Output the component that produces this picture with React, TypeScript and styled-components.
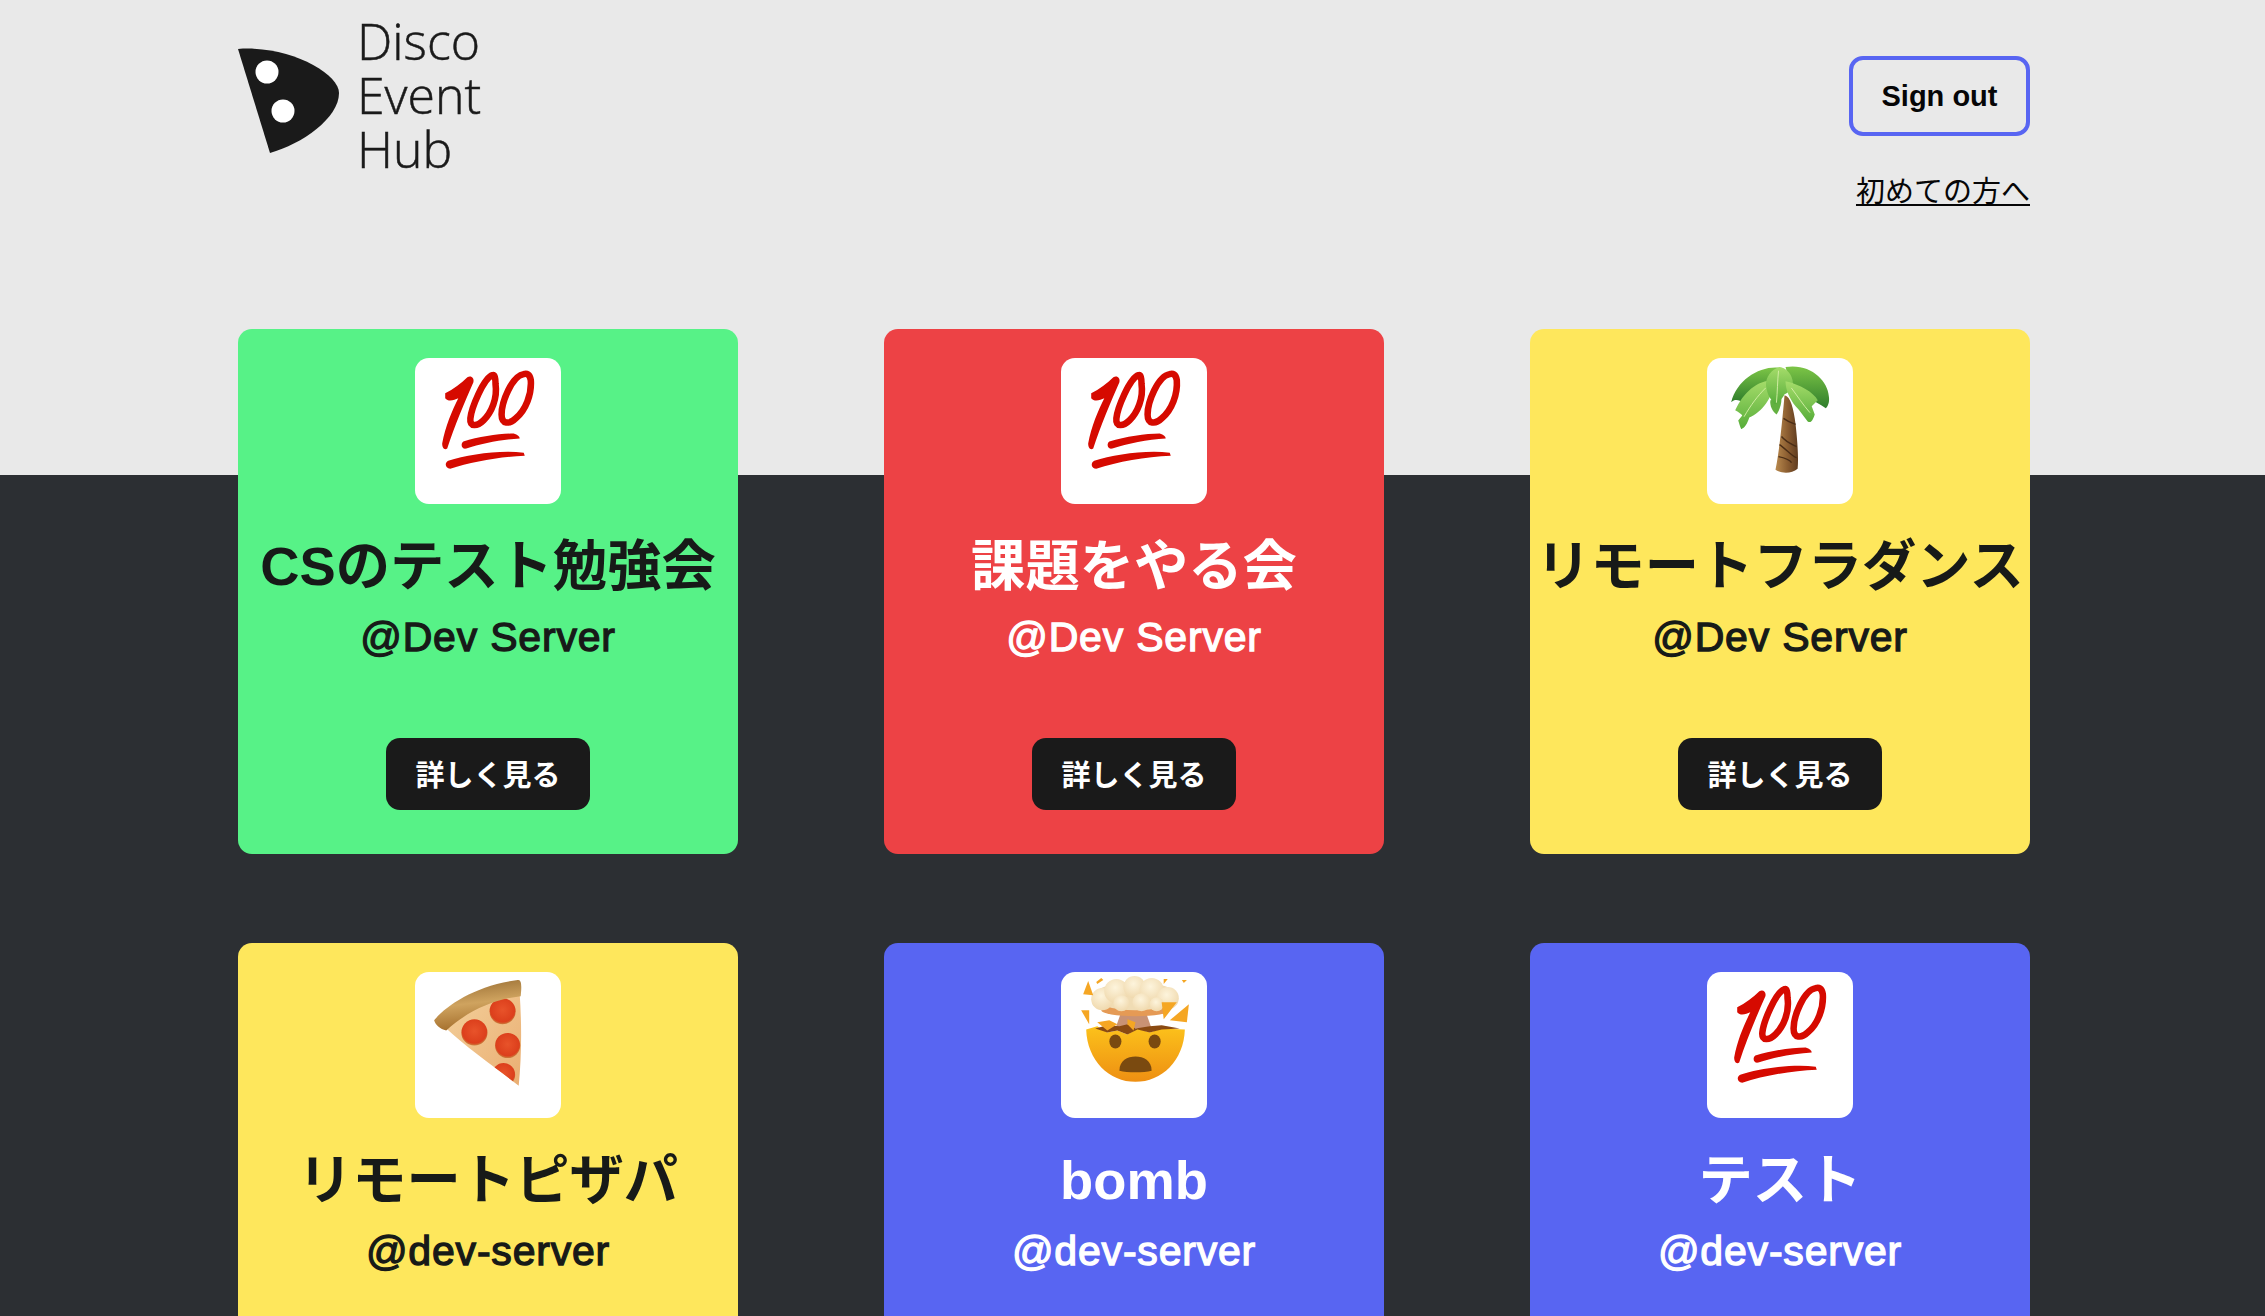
import styled, { createGlobalStyle } from "styled-components";

const GlobalStyle = createGlobalStyle`
  html, body {
    margin: 0;
    padding: 0;
  }
  body {
    font-family: "Liberation Sans", "Noto Sans CJK JP", sans-serif;
  }
`;

const Page = styled.div`
  height: 100vh;
  overflow: hidden;
  background: linear-gradient(#e9e9e9 0, #e9e9e9 475px, #2c2f33 475px);
`;

const Container = styled.div`
  width: 1792px;
  margin-left: 238px;
`;

const Header = styled.header`
  height: 329px;
  display: flex;
  justify-content: space-between;
  align-items: flex-start;
`;

const Logo = styled.div`
  display: flex;
  gap: 15px;
  padding-top: 14px;
`;

const LogoMark = styled.svg`
  width: 104px;
  height: 150px;
  margin-top: 14px;
`;

const LogoText = styled.div`
  font-family: "Open Sans", sans-serif;
  font-weight: 300;
  font-size: 50px;
  line-height: 54px;
  color: #1a1a1a;
  -webkit-text-stroke: 0.5px #1a1a1a;
`;

const HeaderRight = styled.div`
  display: flex;
  flex-direction: column;
  align-items: flex-end;
  padding-top: 56px;
`;

const SignOut = styled.button`
  width: 181px;
  height: 80px;
  box-sizing: border-box;
  border: 4px solid #5865f2;
  border-radius: 14px;
  background: transparent;
  color: #060607;
  font-family: "Liberation Sans", sans-serif;
  font-weight: 700;
  font-size: 29px;
`;

const HelpLink = styled.a`
  margin-top: 34px;
  font-family: "Noto Sans CJK JP", sans-serif;
  font-size: 29px;
  line-height: 38px;
  color: #060607;
  text-decoration: underline;
`;

const Grid = styled.div`
  display: grid;
  grid-template-columns: repeat(3, 500px);
  column-gap: 146px;
  row-gap: 89px;
`;

const Card = styled.div<{ $bg: string; $fg: string }>`
  height: 525px;
  box-sizing: border-box;
  padding: 29px 0 44px;
  border-radius: 14px;
  background: ${(p) => p.$bg};
  color: ${(p) => p.$fg};
  display: flex;
  flex-direction: column;
  align-items: center;
`;

const IconBox = styled.div`
  width: 146px;
  height: 146px;
  flex: none;
  border-radius: 14px;
  background: #fff;
`;

const EmojiSvg = styled.svg`
  display: block;
  width: 146px;
  height: 146px;
`;

const Title = styled.h2`
  margin: 24px 0 0;
  font-size: 54.3px;
  line-height: 78px;
  font-weight: 700;
  white-space: nowrap;
`;

const Server = styled.div`
  margin-top: 6px;
  font-size: 41px;
  line-height: 50px;
  font-weight: 400;
  letter-spacing: 0.8px;
  -webkit-text-stroke: 1.3px currentColor;
`;

const Details = styled.button`
  margin-top: auto;
  width: 204px;
  height: 72px;
  padding: 0 0 3px;
  border: 0;
  border-radius: 14px;
  background: #1a1a1a;
  color: #fff;
  font-family: "Noto Sans CJK JP", sans-serif;
  font-weight: 700;
  font-size: 29px;
`;

const Hundred = () => (
  <EmojiSvg viewBox="0 0 145 145">
    <path
      d="M30 35 C38 31 46 25 52 19 C56 17 59 20 58 24 C50 42 39 68 32 90 C29 92 27 89 27 85 C30 68 37 52 43 40 C39 42 33 44 30 40 Z"
      fill="#d60a00"
    />
    <g fill="none" stroke="#d60a00" strokeLinecap="round" strokeWidth="6.5">
      <path d="M77 17 C68 20 56 50 55 60 C54 69 62 68 68 62 C76 54 82 40 80 26 C80 20 79 16 77 17 Z" />
      <path d="M108 16 C96 18 86 44 86 56 C86 66 94 66 100 60 C110 52 116 36 115 22 C114 16 111 15 108 16 Z" />
    </g>
    <path d="M48 83 C64 78 84 75 98 75 C102 76 104 78 104 80 C86 81 66 85 51 90 C46 91 45 85 48 83 Z" fill="#d60a00" />
    <path d="M33 102 C52 96 84 91 108 94 L109 97 C84 98 56 103 35 110 C30 110 29 104 33 102 Z" fill="#d60a00" />
  </EmojiSvg>
);

const Palm = () => (
  <EmojiSvg viewBox="0 0 145 145">
    <defs>
      <linearGradient id="trunk" x1="0" x2="1">
        <stop offset="0" stopColor="#b98a4e" />
        <stop offset="0.55" stopColor="#8a5c30" />
        <stop offset="1" stopColor="#5f3c20" />
      </linearGradient>
      <linearGradient id="leafDark" x1="0" y1="0" x2="0" y2="1">
        <stop offset="0" stopColor="#7cc546" />
        <stop offset="1" stopColor="#2f7d2c" />
      </linearGradient>
      <linearGradient id="leafLight" x1="0" y1="0" x2="0" y2="1">
        <stop offset="0" stopColor="#a5dc6a" />
        <stop offset="1" stopColor="#57ad3a" />
      </linearGradient>
    </defs>
    <path d="M77 37 C83 38 86 50 88 66 C90 84 91 100 90 110 C84 115 74 115 68 111 C72 92 75 60 77 37 Z" fill="url(#trunk)" />
    <g fill="none" stroke="#4a2d16" strokeWidth="1.4">
      <path d="M76 60 C80 63 85 65 88 66" />
      <path d="M74 78 C79 84 85 86 89 88" />
      <path d="M72 86 C78 90 85 98 89 99" />
      <path d="M71 98 C76 99 82 101 84 104" />
    </g>
    <path d="M75 10 C55 6 30 20 24 44 C28 40 32 42 36 44 C42 38 50 36 62 34 C70 28 74 18 75 10 Z" fill="url(#leafDark)" />
    <path d="M78 9 C102 5 120 22 121 38 C122 44 120 48 118 50 C112 46 106 42 98 40 C90 34 80 20 78 9 Z" fill="url(#leafDark)" />
    <path d="M66 22 C50 22 36 34 28 52 C32 54 34 56 35 57 L31 62 C33 68 34 72 35 70 C39 68 41 62 42 59 C54 54 66 40 66 22 Z" fill="url(#leafLight)" />
    <path d="M63 42 C62 48 66 54 69 56 C72 52 74 46 74 40 Z" fill="#63b040" />
    <path d="M72 9 C62 12 57 22 59 30 C61 40 65 42 67 46 C72 44 75 40 77 36 C82 34 86 30 85 22 C83 14 78 10 72 9 Z" fill="url(#leafLight)" />
    <path d="M78 23 C92 26 106 34 110 42 L104 48 L107 56 C105 62 103 65 100 63 C96 58 92 52 88 48 C82 40 78 32 78 23 Z" fill="url(#leafLight)" />
    <g fill="none" stroke="#d7f0a8" strokeWidth="0.9" strokeLinecap="round">
      <path d="M71 13 C70 22 70 34 69 44" />
      <path d="M58 30 C50 38 44 46 37 58" />
      <path d="M84 30 C90 38 95 46 102 54" />
    </g>
  </EmojiSvg>
);

const Pizza = () => (
  <EmojiSvg viewBox="0 0 145 145">
    <defs>
      <linearGradient id="crust" x1="0.4" y1="0" x2="0.6" y2="1">
        <stop offset="0" stopColor="#9c7136" />
        <stop offset="0.45" stopColor="#cfa35f" />
        <stop offset="1" stopColor="#9f6826" />
      </linearGradient>
      <linearGradient id="cheese" x1="0" y1="0" x2="1" y2="1">
        <stop offset="0" stopColor="#f3d09b" />
        <stop offset="1" stopColor="#eaae72" />
      </linearGradient>
      <radialGradient id="pep" cx="0.5" cy="0.45" r="0.55">
        <stop offset="0" stopColor="#e8532a" />
        <stop offset="0.84" stopColor="#dc3f1c" />
        <stop offset="1" stopColor="#c9823f" />
      </radialGradient>
      <clipPath id="slice">
        <path d="M30 55 C52 38 78 26 104 22 C106 50 106 84 103 113 C82 96 52 76 30 55 Z" />
      </clipPath>
    </defs>
    <path d="M30 55 C52 38 78 26 104 22 C106 50 106 84 103 113 C82 96 52 76 30 55 Z" fill="url(#cheese)" />
    <g clipPath="url(#slice)">
      <circle cx="87" cy="39" r="13" fill="url(#pep)" />
      <circle cx="59" cy="60" r="13" fill="url(#pep)" />
      <circle cx="92" cy="73" r="12.5" fill="url(#pep)" />
      <circle cx="88" cy="102" r="11.5" fill="url(#pep)" />
    </g>
    <path d="M19 48 C30 34 60 13 102 8 C106 7 106 14 105 24 C78 27 52 39 31 58 C25 57 20 52 19 48 Z" fill="url(#crust)" />
  </EmojiSvg>
);

const Blast = () => (
  <EmojiSvg viewBox="0 0 145 145">
    <defs>
      <linearGradient id="face" x1="0" y1="0" x2="0" y2="1">
        <stop offset="0" stopColor="#fcc21b" />
        <stop offset="1" stopColor="#ee8f12" />
      </linearGradient>
      <radialGradient id="puff" cx="0.45" cy="0.35" r="0.7">
        <stop offset="0" stopColor="#fdf4dc" />
        <stop offset="1" stopColor="#efd7aa" />
      </radialGradient>
    </defs>
    <path d="M59 42 H85 L90 56 H54 Z" fill="#c99274" />
    <ellipse cx="74" cy="38" rx="34" ry="6" fill="#e59a55" />
    <ellipse cx="74" cy="24" rx="42" ry="14" fill="#f0dcb4" />
    <g fill="url(#puff)">
      <circle cx="41" cy="27" r="11" />
      <circle cx="55" cy="19" r="12" />
      <circle cx="73" cy="15" r="11" />
      <circle cx="90" cy="18" r="12" />
      <circle cx="106" cy="26" r="11" />
      <circle cx="60" cy="31" r="8" />
      <circle cx="80" cy="30" r="9" />
      <circle cx="95" cy="32" r="7" />
    </g>
    <path d="M25 57 L36 54 L46 60 L56 58 L66 62 L76 56 L88 60 L100 56 L123 57 C122 88 100 109 74 109 C48 109 26 88 25 57 Z" fill="url(#face)" />
    <path d="M34 56 L46 53 L58 54 L66 52 L74 56 L88 54 L100 53 L118 56 L100 57 L88 60 L76 57 L66 62 L56 58 L46 60 Z" fill="#8a4a12" />
    <ellipse cx="54" cy="69" rx="6" ry="7" fill="#7a4a10" />
    <ellipse cx="93" cy="69" rx="6" ry="7" fill="#7a4a10" />
    <path d="M58 98 C58 88 66 84 74 84 C82 84 90 88 90 98 C82 100 66 100 58 98 Z" fill="#7a4a10" />
    <g fill="#f5a623">
      <path d="M27 9 L32 23 L22 22 Z" />
      <path d="M40 6 L42 8 L36 12 L35 10 Z" />
      <path d="M102 7 L106 7 L102 12 Z" />
      <path d="M120 8 L125 8 L122 11 Z" />
      <path d="M100 30 L115 30 L102 47 Z" />
      <path d="M127 32 L108 48 L125 50 Z" />
      <path d="M20 38 L28 38 L28 52 Z" />
      <path d="M36 50 L48 48 L56 52 L46 58 Z" />
      <path d="M66 47 L74 50 L72 58 L66 52 Z" />
    </g>
  </EmojiSvg>
);

const GREEN = "#57f287";
const RED = "#ed4245";
const YELLOW = "#fee75c";
const BLURPLE = "#5865f2";
const DARK = "#171a18";

const events = [
  { title: "CSのテスト勉強会", server: "@Dev Server", bg: GREEN, fg: DARK, icon: <Hundred /> },
  { title: "課題をやる会", server: "@Dev Server", bg: RED, fg: "#fff", icon: <Hundred /> },
  { title: "リモートフラダンス", server: "@Dev Server", bg: YELLOW, fg: DARK, icon: <Palm /> },
  { title: "リモートピザパ", server: "@dev-server", bg: YELLOW, fg: DARK, icon: <Pizza /> },
  { title: "bomb", server: "@dev-server", bg: BLURPLE, fg: "#fff", icon: <Blast /> },
  { title: "テスト", server: "@dev-server", bg: BLURPLE, fg: "#fff", icon: <Hundred /> },
];

export default function App() {
  return (
    <Page>
      <GlobalStyle />
      <Container>
        <Header>
          <Logo>
            <LogoMark viewBox="0 0 104 110">
              <path d="M0 1 C50 -3 101 25 101 45 C101 70 64 96 32 105 Z" fill="#1a1a1a" />
              <circle cx="29" cy="24" r="11.5" fill="#fff" />
              <circle cx="45" cy="63" r="11.5" fill="#fff" />
            </LogoMark>
            <LogoText>
              Disco
              <br />
              Event
              <br />
              Hub
            </LogoText>
          </Logo>
          <HeaderRight>
            <SignOut>Sign out</SignOut>
            <HelpLink>初めての方へ</HelpLink>
          </HeaderRight>
        </Header>
        <Grid>
          {events.map((e, i) => (
            <Card key={i} $bg={e.bg} $fg={e.fg}>
              <IconBox>{e.icon}</IconBox>
              <Title>{e.title}</Title>
              <Server>{e.server}</Server>
              <Details>詳しく見る</Details>
            </Card>
          ))}
        </Grid>
      </Container>
    </Page>
  );
}
